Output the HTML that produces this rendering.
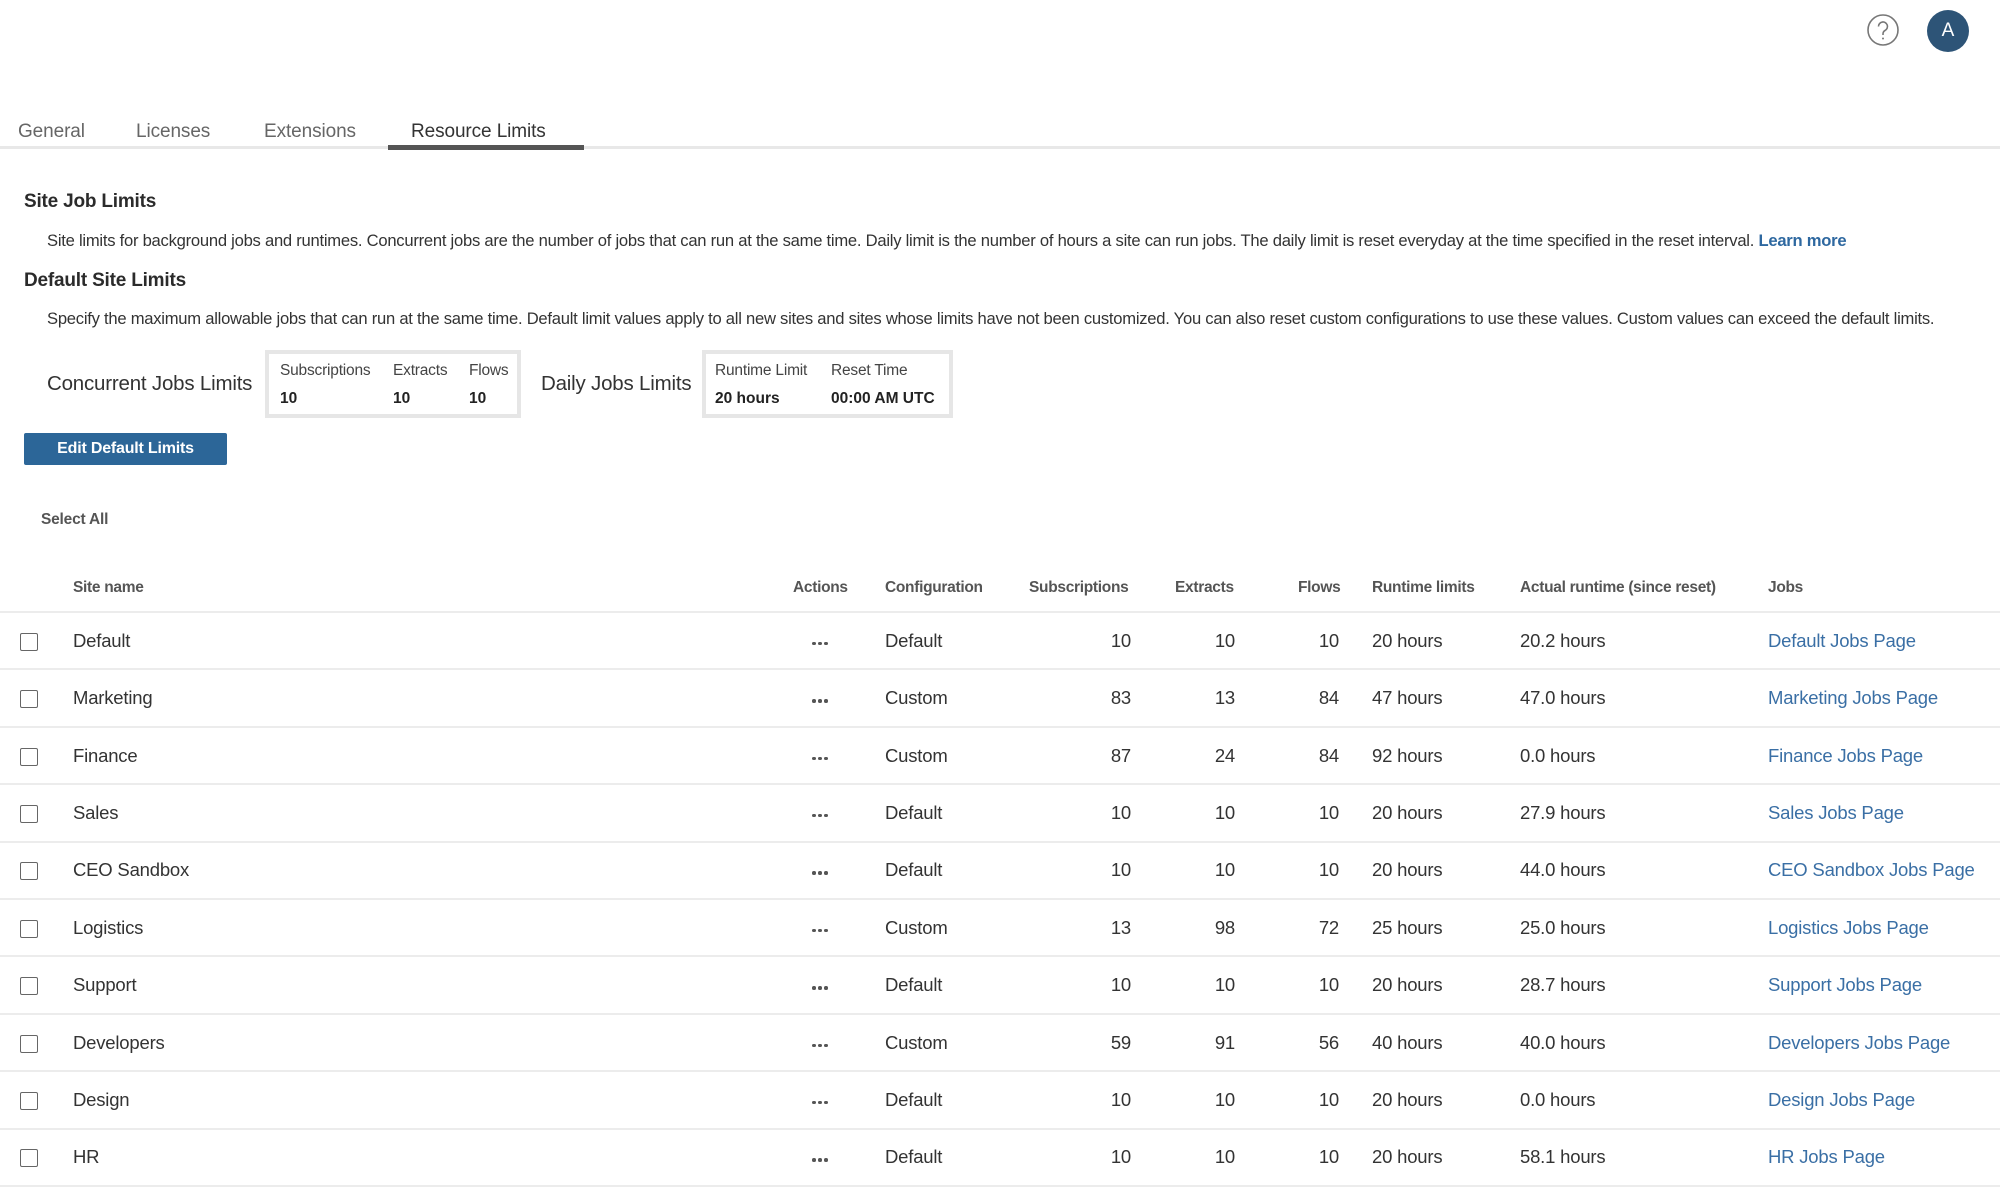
<!DOCTYPE html>
<html><head><meta charset="utf-8"><style>
*{margin:0;padding:0;box-sizing:border-box}
body{width:2000px;height:1199px;background:#fff;font-family:"Liberation Sans",sans-serif;color:#333;position:relative;overflow:hidden}
.a{position:absolute;white-space:nowrap}
.tab{top:121px;font-size:19px;color:#666;letter-spacing:-0.1px}
h2{position:absolute;font-size:19px;font-weight:bold;color:#2b2b2b;letter-spacing:-0.2px}
.desc{font-size:16.6px;color:#333;left:47px;letter-spacing:-0.25px}
.box{position:absolute;border:4px solid #e6e6e6;height:68px;top:350px}
.lbl{font-size:15.5px;color:#444;top:8px;letter-spacing:-0.2px}
.val{font-size:15.5px;font-weight:bold;color:#222;top:36px}
.hd{font-size:15.5px;font-weight:bold;color:#555;top:579px;letter-spacing:-0.3px}
.line{position:absolute;left:0;width:2000px;height:2px;background:#ececec}
.cell{font-size:18.5px;color:#333;letter-spacing:-0.2px}
.r{text-align:right}
.lnk{color:#3a6fa5}
.cb{position:absolute;left:20px;width:18px;height:18px;border:1.5px solid #666;border-radius:2px}
.dots{position:absolute;left:812px;width:18px;height:4px}
.dots i{position:absolute;top:0;width:3.5px;height:3.5px;border-radius:50%;background:#555}
</style></head><body>
<svg class="a" style="left:1866px;top:13px" width="36" height="36" viewBox="0 0 36 36"><circle cx="17" cy="17" r="15" fill="none" stroke="#777" stroke-width="1.6"/><path d="M12.5 13.5a4.5 4.5 0 1 1 6.5 4c-1.5.8-2 1.8-2 3.5v1" fill="none" stroke="#777" stroke-width="1.6"/><circle cx="17" cy="25.5" r="1" fill="#777"/></svg>
<div class="a" style="left:1927px;top:10px;width:42px;height:42px;border-radius:50%;background:#2d5477;color:#fff;font-size:19px;text-align:center;line-height:42px">A</div>

<div class="a tab" style="left:18px">General</div>
<div class="a tab" style="left:136px">Licenses</div>
<div class="a tab" style="left:264px">Extensions</div>
<div class="a tab" style="left:411px;color:#333">Resource Limits</div>
<div class="a" style="left:0;top:146px;width:2000px;height:3px;background:#e8e8e8"></div>
<div class="a" style="left:388px;top:145px;width:196px;height:5px;background:#555"></div>

<h2 style="left:24px;top:191px">Site Job Limits</h2>
<div class="a desc" style="top:231px">Site limits for background jobs and runtimes. Concurrent jobs are the number of jobs that can run at the same time. Daily limit is the number of hours a site can run jobs. The daily limit is reset everyday at the time specified in the reset interval. <b style="color:#2e68a0">Learn more</b></div>
<h2 style="left:24px;top:270px">Default Site Limits</h2>
<div class="a desc" style="top:309px">Specify the maximum allowable jobs that can run at the same time. Default limit values apply to all new sites and sites whose limits have not been customized. You can also reset custom configurations to use these values. Custom values can exceed the default limits.</div>

<div class="a" style="left:47px;top:372px;font-size:20.5px;color:#333;letter-spacing:-0.2px">Concurrent Jobs Limits</div>
<div class="box" style="left:265px;width:256px">
<div class="a lbl" style="left:11px">Subscriptions</div><div class="a lbl" style="left:124px">Extracts</div><div class="a lbl" style="left:200px">Flows</div>
<div class="a val" style="left:11px">10</div><div class="a val" style="left:124px">10</div><div class="a val" style="left:200px">10</div></div>
<div class="a" style="left:541px;top:372px;font-size:20.5px;color:#333;letter-spacing:-0.2px">Daily Jobs Limits</div>
<div class="box" style="left:702px;width:251px">
<div class="a lbl" style="left:9px">Runtime Limit</div><div class="a lbl" style="left:125px">Reset Time</div>
<div class="a val" style="left:9px">20 hours</div><div class="a val" style="left:125px">00:00 AM UTC</div></div>

<div class="a" style="left:24px;top:433px;width:203px;height:32px;background:#2c6698;border-radius:2px;color:#fff;font-weight:bold;font-size:16px;text-align:center;line-height:32px;letter-spacing:-0.2px">Edit Default Limits</div>
<div class="a" style="left:41px;top:511px;font-size:15.5px;font-weight:bold;color:#555;letter-spacing:-0.2px">Select All</div>

<div class="a hd" style="left:73px">Site name</div>
<div class="a hd" style="left:793px">Actions</div>
<div class="a hd" style="left:885px">Configuration</div>
<div class="a hd" style="left:1029px">Subscriptions</div>
<div class="a hd" style="left:1175px">Extracts</div>
<div class="a hd" style="left:1298px">Flows</div>
<div class="a hd" style="left:1372px">Runtime limits</div>
<div class="a hd" style="left:1520px">Actual runtime (since reset)</div>
<div class="a hd" style="left:1768px">Jobs</div>
<div class="line" style="top:611px"></div>

<div id="rows"></div>
<script>
var d=[["Default","Default",10,10,10,"20 hours","20.2 hours"],["Marketing","Custom",83,13,84,"47 hours","47.0 hours"],["Finance","Custom",87,24,84,"92 hours","0.0 hours"],["Sales","Default",10,10,10,"20 hours","27.9 hours"],["CEO Sandbox","Default",10,10,10,"20 hours","44.0 hours"],["Logistics","Custom",13,98,72,"25 hours","25.0 hours"],["Support","Default",10,10,10,"20 hours","28.7 hours"],["Developers","Custom",59,91,56,"40 hours","40.0 hours"],["Design","Default",10,10,10,"20 hours","0.0 hours"],["HR","Default",10,10,10,"20 hours","58.1 hours"]];
var h="";
d.forEach(function(r,i){var c=612+57.4*i+28.7;var t=c-11;
h+='<div class="cb" style="top:'+(c-8)+'px"></div>';
h+='<div class="a cell" style="left:73px;top:'+t+'px">'+r[0]+'</div>';
h+='<div class="dots" style="top:'+(c+1)+'px"><i style="left:0"></i><i style="left:6px"></i><i style="left:12px"></i></div>';
h+='<div class="a cell" style="left:885px;top:'+t+'px">'+r[1]+'</div>';
h+='<div class="a cell r" style="left:1031px;width:100px;top:'+t+'px">'+r[2]+'</div>';
h+='<div class="a cell r" style="left:1135px;width:100px;top:'+t+'px">'+r[3]+'</div>';
h+='<div class="a cell r" style="left:1239px;width:100px;top:'+t+'px">'+r[4]+'</div>';
h+='<div class="a cell" style="left:1372px;top:'+t+'px">'+r[5]+'</div>';
h+='<div class="a cell" style="left:1520px;top:'+t+'px">'+r[6]+'</div>';
h+='<div class="a cell lnk" style="left:1768px;top:'+t+'px">'+r[0]+' Jobs Page</div>';
h+='<div class="line" style="top:'+(612+57.4*(i+1)-1)+'px"></div>';});
document.getElementById("rows").innerHTML=h;
</script>
</body></html>
